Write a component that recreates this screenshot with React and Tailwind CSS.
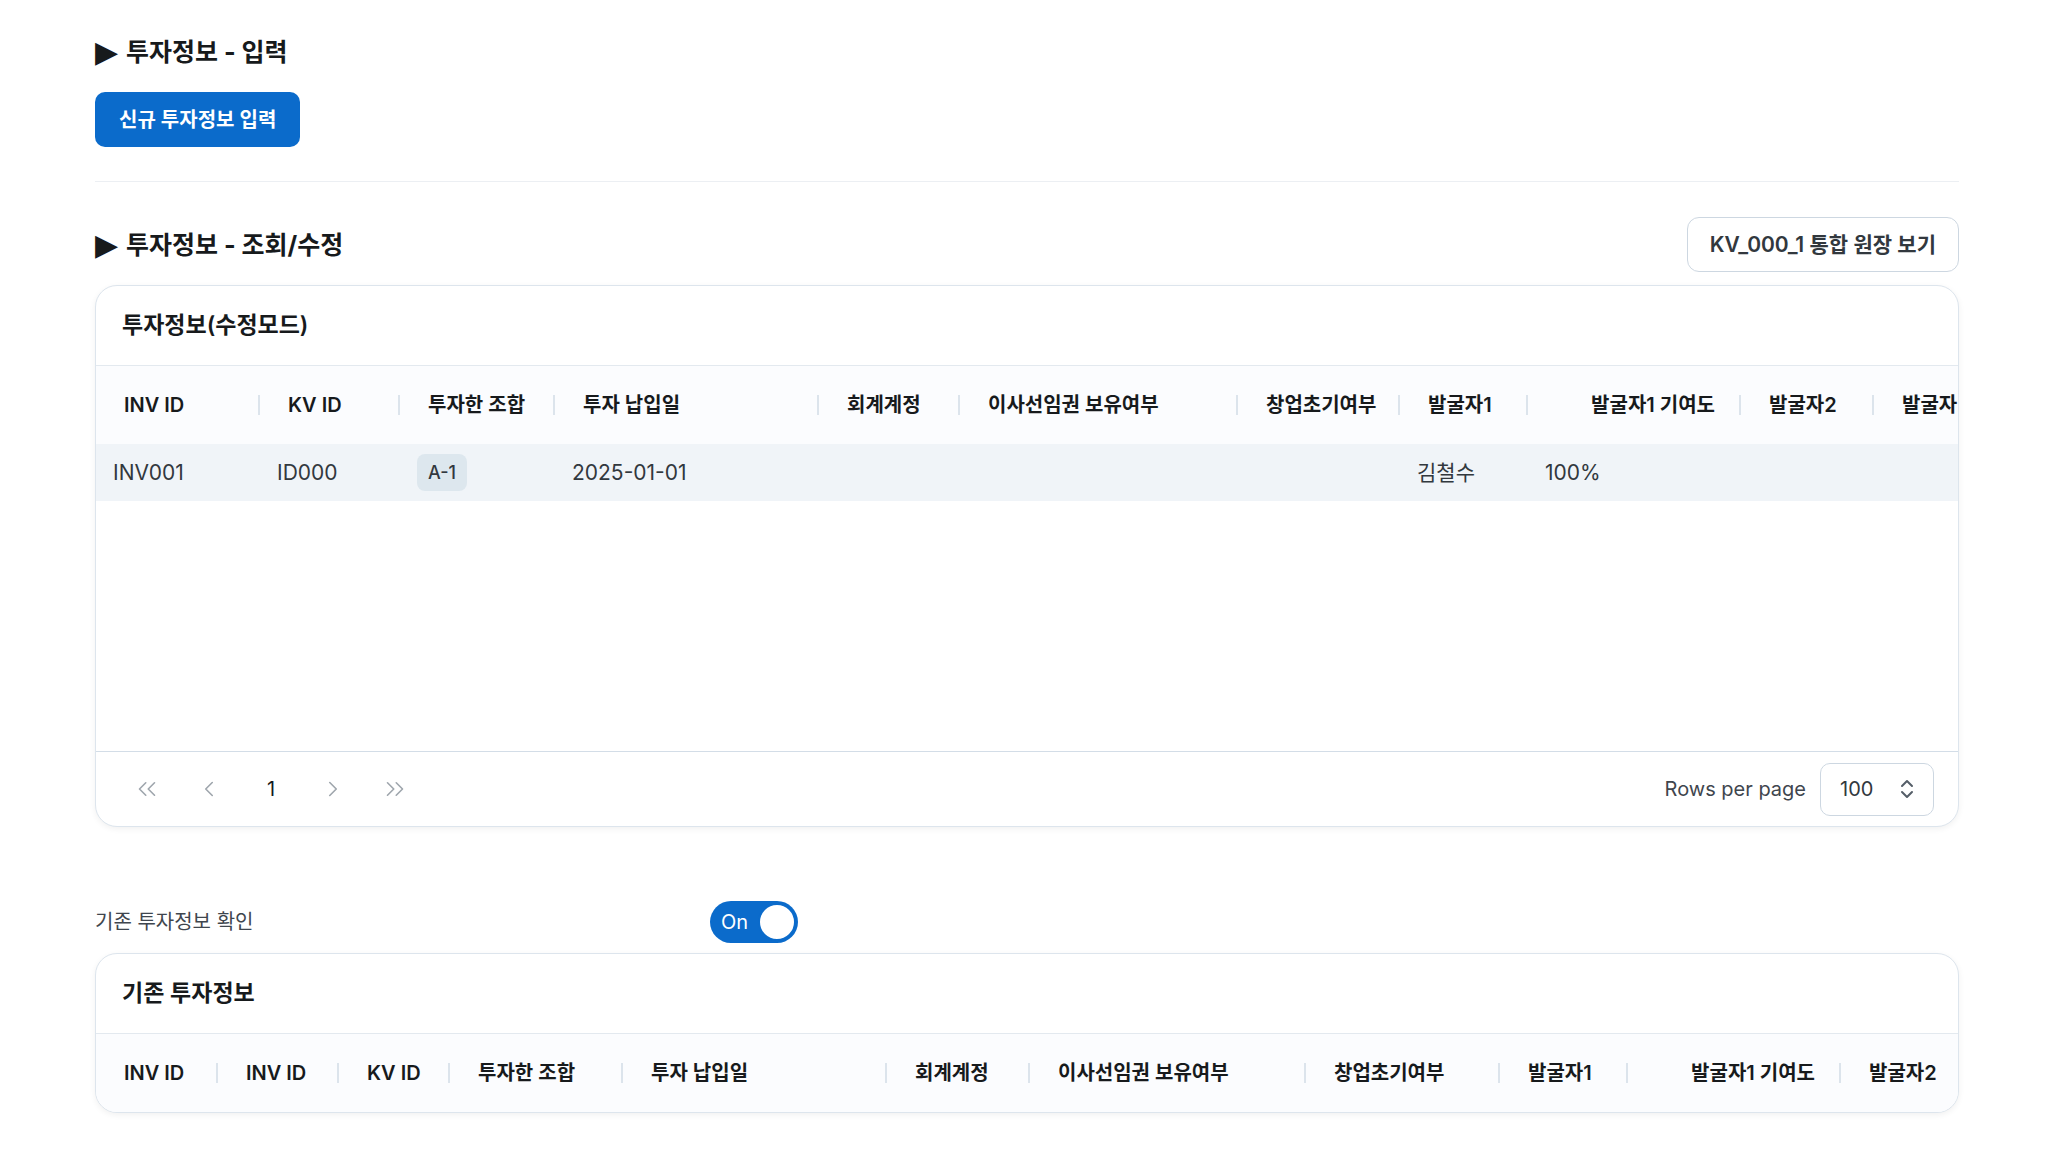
import { ChevronsLeft, ChevronLeft, ChevronRight, ChevronsRight, ChevronsUpDown } from 'lucide-react';

const editCols = [
  { label: 'INV ID', w: 'w-[164px]' },
  { label: 'KV ID', w: 'w-[140px]' },
  { label: '투자한 조합', w: 'w-[155px]' },
  { label: '투자 납입일', w: 'w-[264px]' },
  { label: '회계계정', w: 'w-[141px]' },
  { label: '이사선임권 보유여부', w: 'w-[278px]' },
  { label: '창업초기여부', w: 'w-[162px]' },
  { label: '발굴자1', w: 'w-[128px]' },
  { label: '발굴자1 기여도', w: 'w-[213px]', right: true },
  { label: '발굴자2', w: 'w-[133px]' },
  { label: '발굴자2 기여도', w: 'w-[213px]' },
];

const oldCols = [
  { label: 'INV ID', w: 'w-[122px]' },
  { label: 'INV ID', w: 'w-[121px]' },
  { label: 'KV ID', w: 'w-[111px]' },
  { label: '투자한 조합', w: 'w-[173px]' },
  { label: '투자 납입일', w: 'w-[264px]' },
  { label: '회계계정', w: 'w-[143px]' },
  { label: '이사선임권 보유여부', w: 'w-[276px]' },
  { label: '창업초기여부', w: 'w-[194px]' },
  { label: '발굴자1', w: 'w-[128px]' },
  { label: '발굴자1 기여도', w: 'w-[213px]', right: true },
  { label: '발굴자2', w: 'w-[118px]', last: true },
];

// one sample row for the edit table
const row = ['INV001', 'ID000', 'A-1', '2025-01-01', '', '', '', '김철수', '100%', '', ''];

function SectionTitle({ children }) {
  return (
    <h2 className="flex items-center gap-[8px] text-[25px] leading-[32px] font-bold text-[#171a1c]">
      <span className="font-['DejaVu_Sans'] text-[30px] leading-[32px]">▶</span>
      <span>{children}</span>
    </h2>
  );
}

function HeaderRow({ cols }) {
  return (
    <div className="flex h-[78px] bg-[#fbfcfe] whitespace-nowrap">
      {cols.map((c, i) => (
        <div key={i} className={`${c.w} shrink-0 flex items-center pl-[28px]`}>
          <span className={`flex-1 text-[20px] font-semibold text-[#171a1c] ${c.right ? 'text-right pr-[24px]' : ''}`}>
            {c.label}
          </span>
          {!c.last && <span className="w-[2px] h-[20px] bg-[#dce4ec]" />}
        </div>
      ))}
    </div>
  );
}

export default function App() {
  return (
    <div className="min-h-screen bg-white font-['Inter','Noto_Sans_CJK_KR',sans-serif] text-[#32383e]">
      <div className="ml-[95px] w-[1864px] pt-[36px] pb-[40px]">
        <SectionTitle>투자정보 - 입력</SectionTitle>
        <button className="mt-[24px] h-[55px] px-[24px] rounded-[10px] bg-[#0b6bcb] text-white text-[20px] font-semibold">
          신규 투자정보 입력
        </button>

        <div className="mt-[34px] h-px bg-[#eceff3]" />

        <div className="mt-[35px] flex items-center justify-between h-[55px]">
          <SectionTitle>투자정보 - 조회/수정</SectionTitle>
          <button className="h-[55px] px-[22px] rounded-[12px] border border-[#cdd7e1] bg-white text-[21px] font-semibold text-[#32383e]">
            KV_000_1 통합 원장 보기
          </button>
        </div>

        {/* edit table card */}
        <div className="mt-[13px] rounded-[22px] border border-[#dde5ed] bg-white shadow-[0_2px_6px_rgba(21,21,21,0.06)] overflow-hidden">
          <div className="h-[80px] flex items-center px-[26px] border-b border-[#e3e9ef]">
            <span className="text-[23px] font-semibold text-[#171a1c]">투자정보(수정모드)</span>
          </div>
          <HeaderRow cols={editCols} />
          <div className="flex h-[57px] bg-[#f0f4f8] whitespace-nowrap items-center">
            {editCols.map((c, i) => (
              <div key={i} className={`${c.w} shrink-0 pl-[17px] text-[21px] text-[#32383e]`}>
                {i === 2 ? (
                  <span className="inline-flex items-center h-[37px] px-[11px] rounded-[8px] bg-[#dde7ee] text-[18px] font-medium">
                    {row[i]}
                  </span>
                ) : (
                  row[i]
                )}
              </div>
            ))}
          </div>
          <div className="h-[250px]" />
          <div className="h-[75px] border-t border-[#d3dde7] flex items-center justify-between pl-[31px] pr-[24px]">
            <div className="flex items-center gap-[22px]">
              <span className="w-[40px] flex justify-center text-[#9fa6ad]"><ChevronsLeft size={30} strokeWidth={1.3} /></span>
              <span className="w-[40px] flex justify-center text-[#9fa6ad]"><ChevronLeft size={26} strokeWidth={1.5} /></span>
              <span className="w-[40px] flex justify-center text-[20px] text-[#171a1c]">1</span>
              <span className="w-[40px] flex justify-center text-[#9fa6ad]"><ChevronRight size={26} strokeWidth={1.5} /></span>
              <span className="w-[40px] flex justify-center text-[#9fa6ad]"><ChevronsRight size={30} strokeWidth={1.3} /></span>
            </div>
            <div className="flex items-center gap-[14px]">
              <span className="text-[20px] text-[#3f464e]">Rows per page</span>
              <div className="w-[114px] h-[53px] rounded-[10px] border border-[#cdd7e1] flex items-center justify-between pl-[19px] pr-[14px]">
                <span className="text-[20px] text-[#32383e]">100</span>
                <ChevronsUpDown size={24} strokeWidth={2} className="text-[#555e68]" />
              </div>
            </div>
          </div>
        </div>

        <div className="mt-[74px] flex items-center h-[42px]">
          <span className="w-[615px] text-[20px] text-[#3f464e]">기존 투자정보 확인</span>
          <div className="w-[88px] h-[42px] rounded-full bg-[#0b6bcb] flex items-center justify-between pl-[11px] pr-[2px]">
            <span className="text-white text-[20px]">On</span>
            <span className="w-[38px] h-[38px] rounded-full bg-white border-2 border-[#0b6bcb]" />
          </div>
        </div>

        {/* previous data card */}
        <div className="mt-[10px] rounded-[22px] border border-[#dde5ed] bg-white shadow-[0_2px_6px_rgba(21,21,21,0.06)] overflow-hidden">
          <div className="h-[80px] flex items-center px-[26px] border-b border-[#e3e9ef]">
            <span className="text-[23px] font-semibold text-[#171a1c]">기존 투자정보</span>
          </div>
          <HeaderRow cols={oldCols} />
        </div>
      </div>
    </div>
  );
}
